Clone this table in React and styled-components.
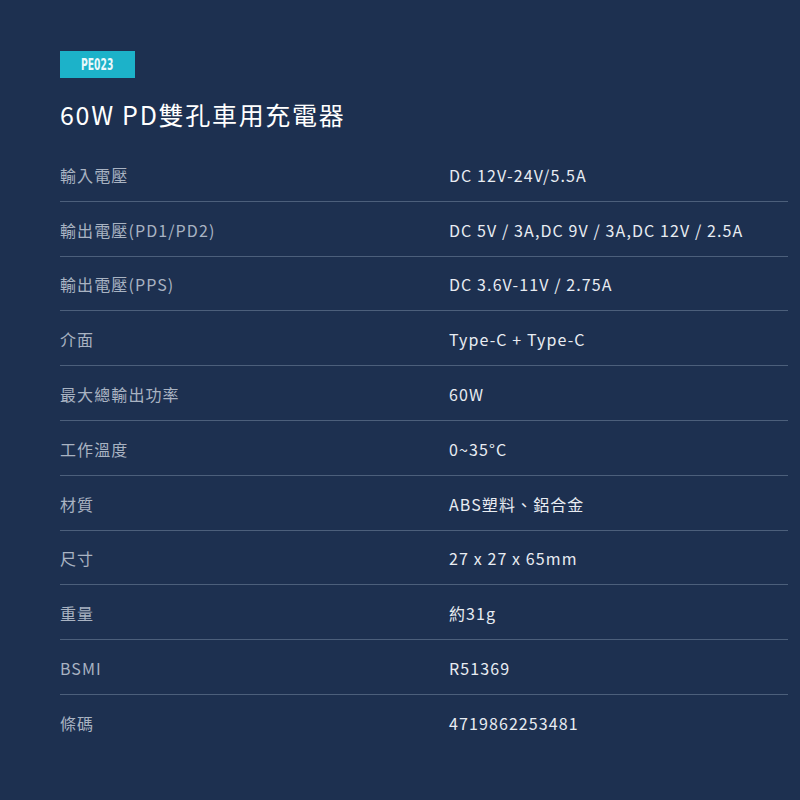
import styled, { createGlobalStyle } from "styled-components";

const GlobalStyle = createGlobalStyle`
  html, body {
    margin: 0;
    padding: 0;
    background: #1d3050;
  }
  body {
    font-family: "Noto Sans CJK TC", "Noto Sans", sans-serif;
  }
`;

const Page = styled.div`
  min-height: 800px;
  padding: 51px 12px 40px 60px;
  box-sizing: border-box;
  background: #1d3050;
`;

const Badge = styled.div`
  width: 75px;
  height: 27px;
  background: #1cb2c9;
  display: flex;
  align-items: center;
  justify-content: center;
  span {
    color: #eaf8fb;
    font-family: "DejaVu Sans Condensed", "DejaVu Sans", sans-serif;
    font-weight: bold;
    font-size: 16px;
    display: inline-block;
    transform: scaleX(0.64);
  }
`;

const Title = styled.h1`
  margin: 19px 0 16px 0;
  color: #ffffff;
  font-size: 25px;
  font-weight: 400;
  line-height: 34px;
  letter-spacing: 1.7px;
`;

const Table = styled.div`
  display: flex;
  flex-direction: column;
`;

const Row = styled.div`
  display: grid;
  grid-template-columns: 389px 1fr;
  align-items: center;
  height: 54.8px;
  padding-top: 2px;
  box-sizing: border-box;
  border-bottom: ${props => (props.last ? "none" : "1px solid #4c5f7b")};
`;

const Label = styled.div`
  color: #a9b3c2;
  font-size: 16px;
  letter-spacing: 1.1px;
`;

const Value = styled.div`
  color: #e8ecf2;
  font-size: 16px;
  letter-spacing: 1.1px;
`;

const specs = [
  ["輸入電壓", "DC 12V-24V/5.5A"],
  ["輸出電壓(PD1/PD2)", "DC 5V / 3A,DC 9V / 3A,DC 12V / 2.5A"],
  ["輸出電壓(PPS)", "DC 3.6V-11V / 2.75A"],
  ["介面", "Type-C + Type-C"],
  ["最大總輸出功率", "60W"],
  ["工作溫度", "0~35°C"],
  ["材質", "ABS塑料、鋁合金"],
  ["尺寸", "27 x 27 x 65mm"],
  ["重量", "約31g"],
  ["BSMI", "R51369"],
  ["條碼", "4719862253481"],
];

export default function App() {
  return (
    <>
      <GlobalStyle />
      <Page>
        <Badge>
          <span>PE023</span>
        </Badge>
        <Title>60W PD雙孔車用充電器</Title>
        <Table>
          {specs.map(([label, value], i) => (
            <Row key={label} last={i === specs.length - 1}>
              <Label>{label}</Label>
              <Value>{value}</Value>
            </Row>
          ))}
        </Table>
      </Page>
    </>
  );
}
